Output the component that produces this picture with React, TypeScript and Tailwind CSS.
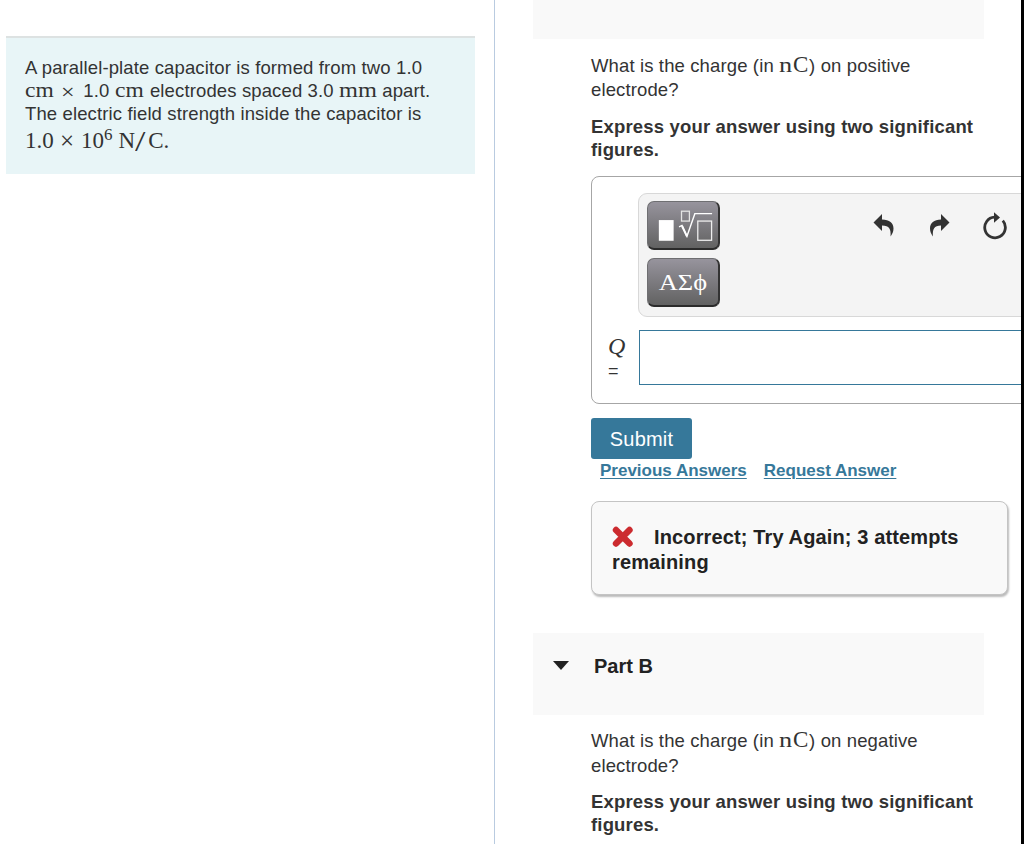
import type { ReactNode } from "react";

type TexProps = {
  children: ReactNode;
  className?: string;
};

// Math text: leading-[0] keeps the taller serif glyphs from moving the baseline.
function Tex({ children, className = "" }: TexProps) {
  return (
    <span
      className={`inline-block whitespace-pre leading-[0] tracking-normal font-['Liberation_Serif',serif] ${className}`}
    >
      {children}
    </span>
  );
}

type QuestionProps = {
  sign: string;
  gapClass: string;
};

function Question({ sign, gapClass }: QuestionProps) {
  return (
    <>
      <p className="h-[23px] whitespace-nowrap">
        What is the charge (in{" "}
        <Tex className="w-[30px] text-[23px]">
          <span className="inline-block w-[14px] origin-left scale-x-[1.25] text-[21px]">n</span>
          C
        </Tex>
        ) on {sign}
      </p>
      <p className={gapClass}>electrode?</p>
      <p className="h-[23px] whitespace-nowrap font-bold tracking-[0.17px]">
        Express your answer using two significant
      </p>
      <p className="h-[23px] font-bold tracking-[0.17px]">figures.</p>
    </>
  );
}

const paletteButton =
  "flex h-[49px] w-[73px] items-center justify-center rounded-[7px] border border-t-[#6f6f72] border-l-[#6f6f72] border-r-[#333] border-b-[#2b2b2b] border-r-2 border-b-2 bg-linear-to-b from-[#97949d] to-[#626262] text-white";

function AnswerBox() {
  return (
    <div className="h-[228px] w-[450px] rounded-[8px] border border-[#a6a6a6] bg-white pt-[16px] pl-[46px]">
      <div className="flex h-[124px] rounded-[9px] border border-[#d8d8d8] bg-[#f4f4f4] pt-[7px] pl-[8px]">
        <div className="flex flex-col gap-2">
          <button type="button" className={paletteButton} aria-label="Templates">
            <svg width="71" height="47" viewBox="0 0 71 47" fill="none">
              <rect x="11" y="18" width="15" height="21" fill="#fff" />
              <rect x="34" y="9" width="8" height="10" stroke="#e4e4e4" strokeWidth="1.3" />
              <path d="M31.500 25l3-1.500 5 11 8-23h17.500" stroke="#fff" strokeWidth="1.4" />
              <path d="M34.500 24l5 10.500" stroke="#fff" strokeWidth="2" />
              <rect x="50.500" y="19" width="14" height="19.500" stroke="#eee" strokeWidth="1.3" />
            </svg>
          </button>
          <button type="button" className={paletteButton}>
            <Tex className="scale-x-[1.1] text-[24px]">ΑΣϕ</Tex>
          </button>
        </div>
        <div className="flex pt-[11px] pl-[153px] text-[#333]">
          <svg className="mr-[34px]" width="22" height="26" viewBox="0 0 22 26" fill="currentColor">
            <path d="M0.500 10.500L9 2V7.500C16.500 7.500 20.500 11 20.500 16.500C20.500 19.500 19.300 22 17.600 24.500C18 17 16.500 13.500 9 13.500V19Z" />
          </svg>
          <svg className="mr-[31px]" width="22" height="26" viewBox="0 0 22 26" fill="currentColor">
            <path d="M20.500 10.500L12 2V7.500C5 7.500 1 11 1 16.500C1 19.500 2.200 22 3.900 24.500C3.500 17 5 13.500 12 13.500V19Z" />
          </svg>
          <svg width="26" height="28" viewBox="0 0 26 28" fill="none">
            <path d="M20.800 8.700A10.300 10.300 0 1 1 12.500 5.200" stroke="currentColor" strokeWidth="2.800" />
            <path d="M12 0.300L18 5.500L12 10.700Z" fill="currentColor" />
          </svg>
        </div>
      </div>
      <div className="mt-[13px] -ml-[31px] flex">
        <div className="w-[32px] pt-[5px] pl-px leading-[26px]">
          <Tex className="text-[24px] italic">Q</Tex>
          <div className="text-[18px] leading-[20px]">=</div>
        </div>
        <div className="h-[55px] flex-1 border border-[#36789a] bg-white" />
      </div>
    </div>
  );
}

export default function App() {
  return (
    <div className="flex h-[844px] w-[1024px] overflow-hidden bg-white font-['Liberation_Sans',Arial,sans-serif] text-[18.5px] leading-[23px] tracking-[0.13px] text-[#333]">
      <aside className="w-[495px] shrink-0 border-r border-[#b9cbe0] pt-[36px] pl-[6px]">
        <div className="h-[138px] w-[469px] border-t-2 border-[#dde2e2] bg-[#e8f5f7] pt-[18px] pl-[19px] whitespace-nowrap">
          <p>A parallel-plate capacitor is formed from two 1.0</p>
          <p>
            <Tex className="w-[30px] text-[21px]">
              <span className="inline-block origin-left scale-x-[1.12]">cm</span>
            </Tex>{" "}
            <Tex className="relative top-[2px] w-[18px] pl-[2px] text-[21px]">
              <span className="inline-block scale-x-[1.15]">×</span>
            </Tex>
            <span className="ml-[5px]">1.0</span>{" "}
            <Tex className="w-[30px] text-[21px]">
              <span className="inline-block origin-left scale-x-[1.12]">cm</span>
            </Tex>{" "}
            electrodes spaced 3.0{" "}
            <Tex className="w-[38px] text-[21px]">
              <span className="inline-block origin-left scale-x-[1.16]">mm</span>
            </Tex>{" "}
            apart.
          </p>
          <p>The electric field strength inside the capacitor is</p>
          <p className="pt-[5px]">
            <Tex className="text-[23px]">
              <span className="inline-block w-[35px]">1.0</span>
              <span className="relative top-px inline-block w-[21px] text-[25px]">×</span>
              10
              <span className="relative -top-[8px] text-[17px]">6</span>
              <span className="ml-[6px]">N</span>
              <span className="relative top-[3px] inline-block w-[11px] origin-left scale-x-125 text-[30px]">/</span>
              <span className="ml-[2px]">C.</span>
            </Tex>
          </p>
        </div>
      </aside>

      <main className="w-[526px] shrink-0 overflow-hidden pl-[38px]">
        <div className="h-[39px] w-[451px] bg-[#f9f9f9]" />
        <section className="pl-[58px]">
          <div className="pt-[15px]">
            <Question sign="positive" gapClass="h-[38px] pt-px" />
          </div>
          <div className="mt-[15px]">
            <AnswerBox />
          </div>
          <button
            type="button"
            className="mt-[14px] block h-[41px] w-[101px] rounded-[3px] bg-[#36789a] pt-px text-[20px] tracking-[0.2px] text-white"
          >
            Submit
          </button>
          <div className="flex h-[23px] gap-[17px] pl-[9px] text-[17px] font-bold tracking-normal whitespace-nowrap text-[#36789a]">
            <a className="underline underline-offset-2">Previous Answers</a>
            <a className="underline underline-offset-2">Request Answer</a>
          </div>
          <div className="mt-[19px] h-[94px] w-[417px] rounded-[8px] border border-[#c4c4c4] bg-[#f9f9f9] pt-[23px] pl-[20px] text-[20px] leading-[25px] font-bold text-[#222] shadow-[1px_2px_2px_#bbb]">
            <p className="flex whitespace-nowrap">
              <svg className="mr-[20px]" width="22" height="23" viewBox="0 0 22 23">
                <path
                  d="M4 5L17.500 18.500M17.500 5L4 18.500"
                  stroke="#cc2b2f"
                  strokeWidth="6.400"
                  strokeLinecap="round"
                />
              </svg>
              Incorrect; Try Again; 3 attempts
            </p>
            <p>remaining</p>
          </div>
        </section>

        <div className="mt-[38px] flex h-[82px] w-[451px] bg-[#f9f9f9] pt-[22px] pl-[20px] text-[20px] font-bold tracking-normal text-[#222]">
          <svg className="mt-[6px] mr-[25px]" width="16" height="9" viewBox="0 0 16 9" fill="currentColor">
            <path d="M0 0H16L8 9Z" />
          </svg>
          Part B
        </div>
        <section className="pt-[14px] pl-[58px]">
          <Question sign="negative" gapClass="h-[38px] pt-[2px]" />
        </section>
      </main>
      <div className="w-[3px] bg-black" />
    </div>
  );
}
